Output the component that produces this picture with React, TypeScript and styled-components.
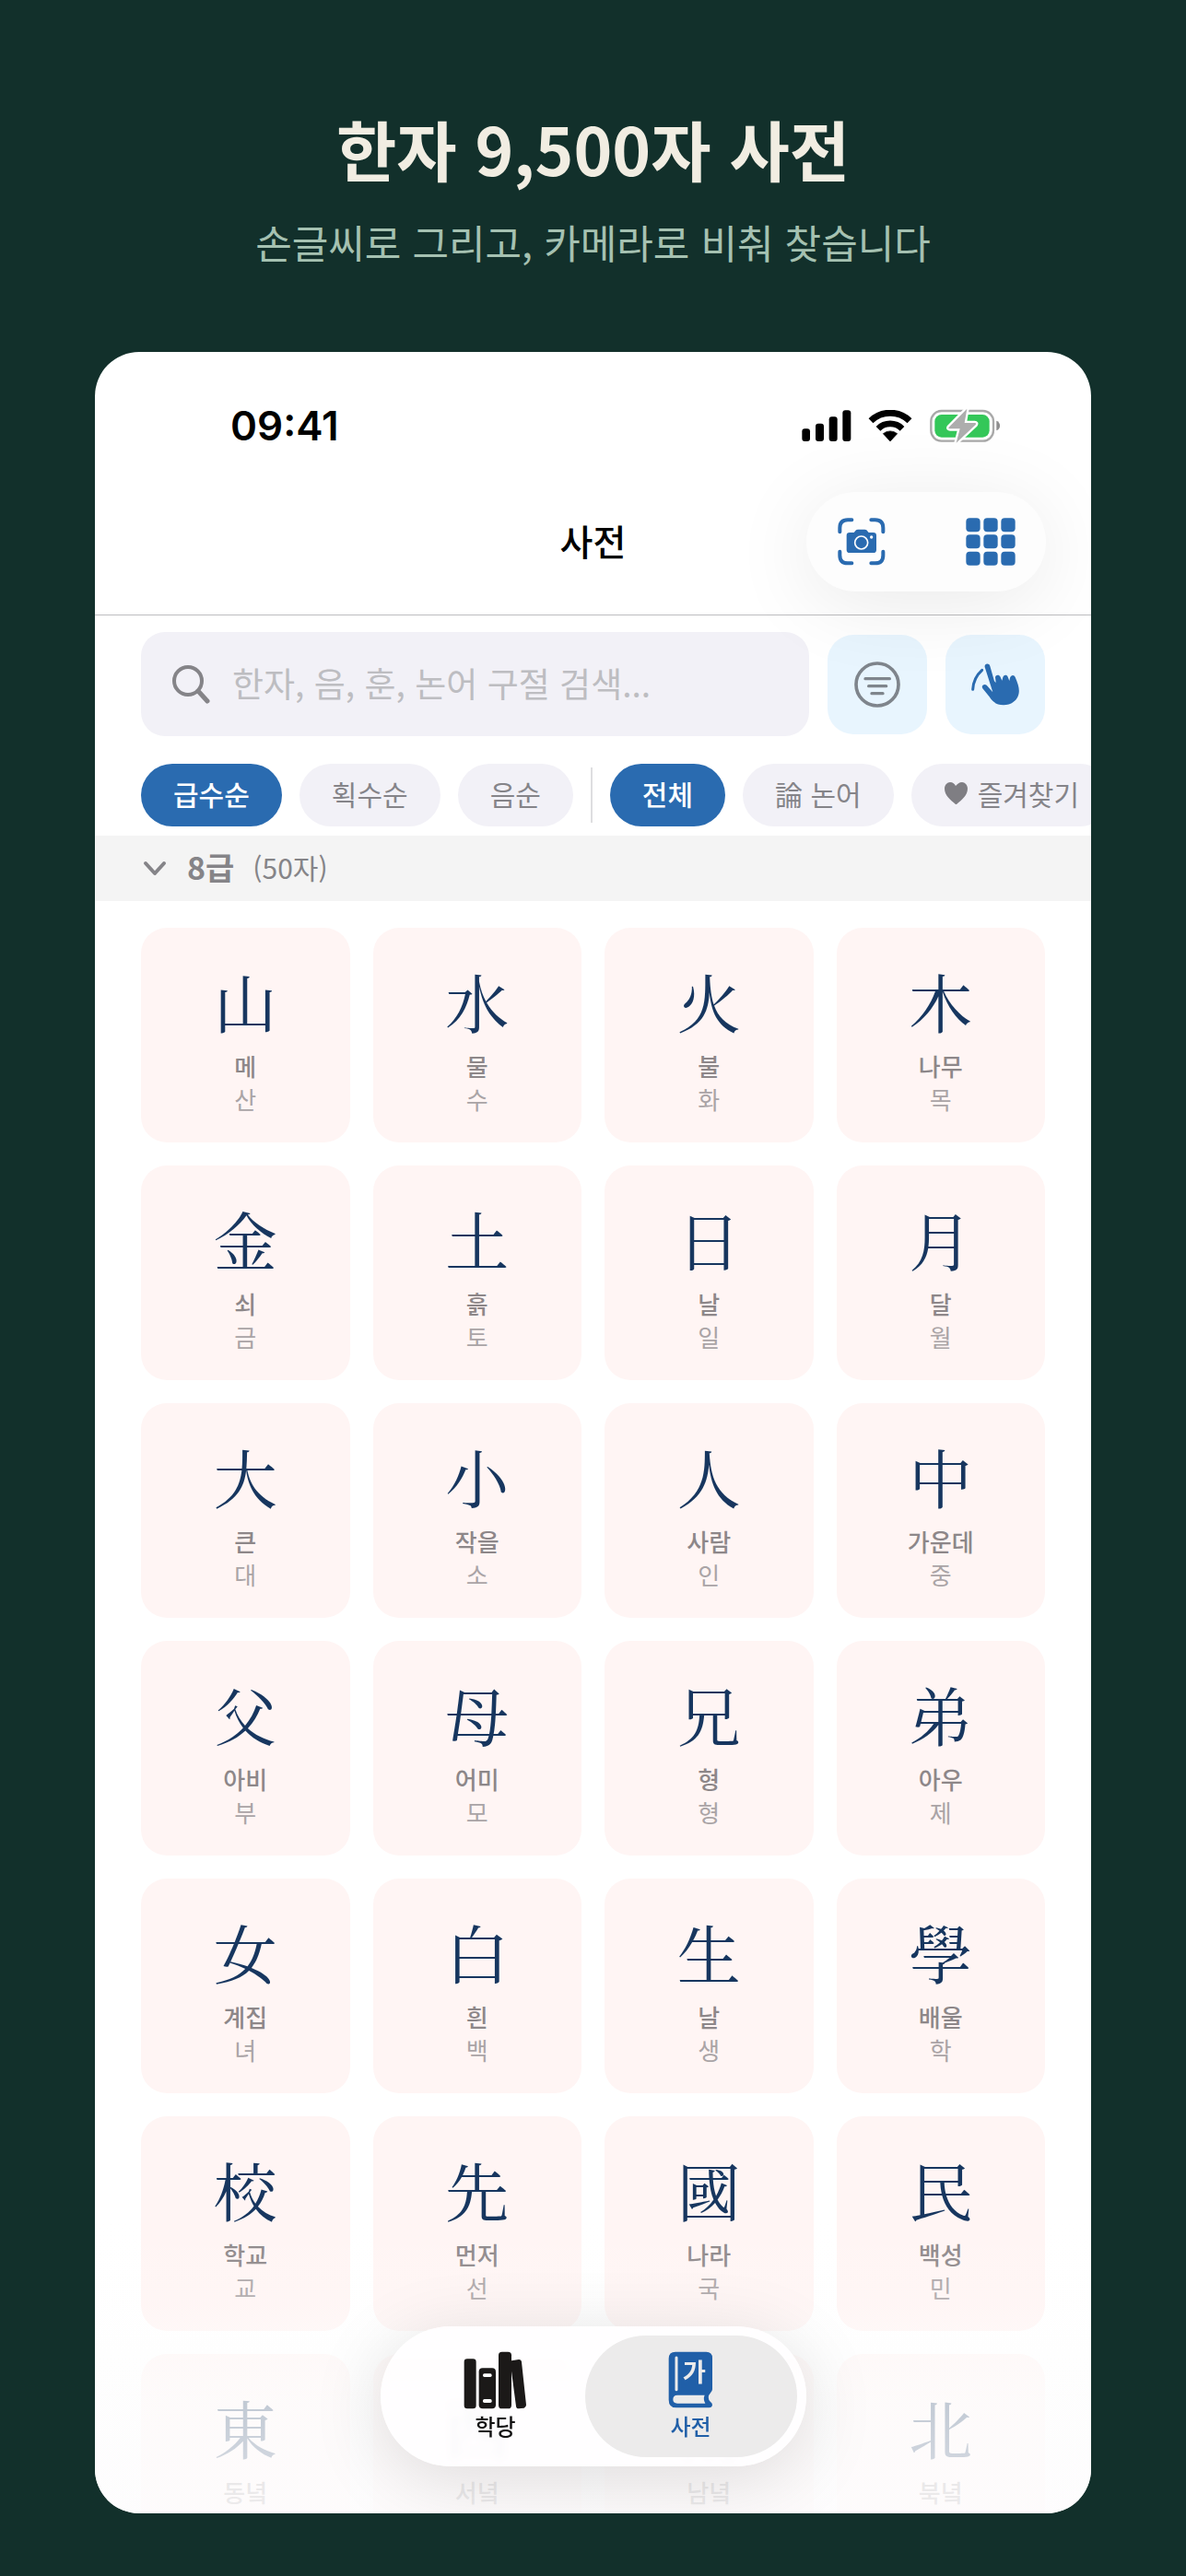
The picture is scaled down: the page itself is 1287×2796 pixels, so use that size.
import React from "react";
import styled, { createGlobalStyle } from "styled-components";

const sans = `"Noto Sans CJK KR", "Noto Sans", sans-serif`;
const serif = `"Noto Serif CJK KR", "Noto Serif CJK JP", "Noto Serif CJK SC", "Noto Serif KR", "Noto Sans CJK KR", serif`;
const blue = "#2a6bb0";

const GlobalStyle = createGlobalStyle`
  * { box-sizing: border-box; }
  body { margin: 0; background: #12302b; font-family: ${sans}; }
  button { font: inherit; border: 0; padding: 0; margin: 0; background: none; cursor: pointer; }
  h1, h2, p { margin: 0; }
  svg { display: block; flex: none; }
`;

const Page = styled.main`
  height: 100vh;
  display: flex;
  flex-direction: column;
  padding: 0 103px 68px;
  background: #12302b;
`;

const Hero = styled.header`
  flex: none;
  height: 382px;
  padding-top: 108px;
  text-align: center;
`;

const Headline = styled.h1`
  font-size: 71px;
  line-height: 104px;
  font-weight: 700;
  color: #f1ede2;
`;

const Tagline = styled.p`
  margin-top: 18px;
  font-size: 43px;
  line-height: 64px;
  color: #a5c1b1;
`;

const Phone = styled.section`
  position: relative;
  flex: 1;
  min-height: 0;
  display: flex;
  flex-direction: column;
  border-radius: 48px;
  background: #fff;
  overflow: hidden;
`;

const TopBar = styled.div`
  position: relative;
  z-index: 1;
  flex: none;
  padding-top: 40px;
  border-bottom: 1px solid #bdbdbf;
`;

const StatusBar = styled.div`
  height: 80px;
  display: flex;
  align-items: center;
  justify-content: space-between;
  padding: 0 98px 0 147px;
`;

const Clock = styled.time`
  font-family: Inter, sans-serif;
  font-size: 44px;
  line-height: 52px;
  font-weight: 600;
  color: #000;
`;

const StatusIcons = styled.div`
  display: flex;
  align-items: center;
  gap: 18px;
`;

const NavBar = styled.div`
  margin-top: 32px;
  padding: 0 49px 25px;
  display: grid;
  grid-template-columns: 1fr auto 1fr;
  align-items: center;
`;

const NavTitle = styled.h2`
  grid-column: 2;
  padding-bottom: 4px;
  font-size: 39px;
  line-height: 56px;
  font-weight: 500;
  color: #000;
`;

const NavActions = styled.div`
  justify-self: end;
  width: 260px;
  height: 108px;
  display: flex;
  justify-content: space-between;
  border-radius: 54px;
  background: #fdfdfd;
  box-shadow: 0 12px 90px rgba(0, 0, 0, 0.09);
`;

const NavButton = styled.button`
  width: 120px;
  display: grid;
  place-items: center;
`;

const SearchRow = styled.form`
  flex: none;
  display: flex;
  align-items: center;
  gap: 20px;
  padding: 18px 50px 0;
`;

const SearchBox = styled.label`
  flex: 1;
  min-width: 0;
  height: 113px;
  display: flex;
  align-items: center;
  gap: 23px;
  padding: 0 34px;
  border-radius: 26px;
  background: #f2f1f7;
`;

const SearchInput = styled.input`
  flex: 1;
  min-width: 0;
  border: 0;
  padding: 0 0 4px;
  outline: 0;
  background: none;
  font-family: ${sans};
  font-size: 37px;
  line-height: 56px;
  color: #1c1c1e;
  &::placeholder { color: #bdbdc1; opacity: 1; }
`;

const ToolButton = styled.button`
  width: 108px;
  height: 108px;
  display: grid;
  place-items: center;
  border-radius: 28px;
  background: #e8f5fe;
`;

const ChipRow = styled.div`
  flex: none;
  display: flex;
  align-items: center;
  gap: 19px;
  padding: 30px 0 10px 50px;
  overflow: hidden;
`;

const Chip = styled.button<{ $on?: boolean }>`
  flex: none;
  height: 68px;
  display: flex;
  align-items: center;
  gap: 10px;
  padding: 0 35px 4px;
  border-radius: 34px;
  background: ${(p) => (p.$on ? blue : "#f2f1f7")};
  color: ${(p) => (p.$on ? "#fff" : "#858489")};
  font-size: 30px;
  line-height: 44px;
  font-weight: ${(p) => (p.$on ? 500 : 400)};
  white-space: nowrap;
`;

const ChipDivider = styled.span`
  flex: none;
  width: 2px;
  height: 60px;
  background: #dedee0;
`;

const SectionHeader = styled.button`
  flex: none;
  height: 71px;
  display: flex;
  align-items: center;
  padding: 0 50px;
  background: #f4f4f4;
  color: #858488;
  text-align: left;
`;

const SectionName = styled.span`
  margin-left: 20px;
  padding-bottom: 4px;
  font-size: 34px;
  line-height: 48px;
  font-weight: 700;
`;

const SectionCount = styled.span`
  margin-left: 20px;
  padding-bottom: 4px;
  font-size: 30px;
  line-height: 48px;
`;

const List = styled.div`
  flex: 1;
  min-height: 0;
  overflow: hidden;
  display: grid;
  grid-template-columns: repeat(4, 1fr);
  grid-auto-rows: 233px;
  gap: 25px;
  padding: 29px 50px 0;
`;

const Card = styled.button`
  display: flex;
  flex-direction: column;
  align-items: center;
  padding-top: 34px;
  border-radius: 28px;
  background: #fff5f4;
`;

const Hanja = styled.span`
  margin-bottom: 6px;
  font-family: ${serif};
  font-size: 69px;
  line-height: 92px;
  color: #17365f;
`;

const Meaning = styled.span`
  font-size: 26px;
  line-height: 36px;
  font-weight: 500;
  color: #8d8789;
`;

const Sound = styled.span`
  font-size: 26px;
  line-height: 36px;
  color: #aaa4a6;
`;

const Fade = styled.div`
  position: absolute;
  inset: auto 0 0;
  height: 320px;
  pointer-events: none;
  background: linear-gradient(
    rgba(253, 253, 253, 0),
    rgba(253, 253, 253, 0.15) 30%,
    rgba(253, 253, 253, 0.5) 46%,
    rgba(253, 253, 253, 0.74) 62%,
    rgba(253, 252, 253, 0.86)
  );
`;

const TabBar = styled.nav`
  position: absolute;
  left: 50%;
  bottom: 51px;
  transform: translateX(-50%);
  height: 152px;
  display: flex;
  padding: 10px;
  border-radius: 76px;
  background: rgba(255, 254, 255, 0.86);
  backdrop-filter: blur(4px);
  box-shadow: 0 14px 80px rgba(0, 0, 0, 0.13);
`;

const Tab = styled.a<{ $on?: boolean }>`
  width: 230px;
  display: flex;
  flex-direction: column;
  align-items: center;
  padding-top: 16px;
  gap: 1px;
  border-radius: 66px;
  background: ${(p) => (p.$on ? "#ecebeb" : "transparent")};
  color: ${(p) => (p.$on ? "#205fa8" : "#121212")};
  font-size: 24px;
  line-height: 34px;
  font-weight: 500;
  text-decoration: none;
  & + & { margin-left: -18px; }
`;

const IconSlot = styled.span`
  height: 64px;
  display: grid;
  place-items: center;
`;

const SignalIcon = () => (
  <svg width="54" height="34" viewBox="30 42 162 102" aria-hidden="true">
    <rect x="31" y="103" width="26" height="41" rx="9" />
    <rect x="75" y="86" width="27" height="58" rx="9" />
    <rect x="119" y="64" width="27" height="80" rx="9" />
    <rect x="163" y="43" width="27" height="101" rx="9" />
  </svg>
);

const WifiIcon = () => (
  <svg width="48" height="34" viewBox="245 42 144 102" aria-hidden="true">
    <path d="M254 77 A91 91 0 0 1 380 77" fill="none" stroke="#000" strokeWidth="21" />
    <path d="M278 103 A55 55 0 0 1 356 103" fill="none" stroke="#000" strokeWidth="20" />
    <path d="M317 144 L294 119 A36 36 0 0 1 340 119 Z" stroke="#000" strokeWidth="2" strokeLinejoin="round" />
  </svg>
);

const BatteryIcon = () => (
  <svg width="78" height="38" viewBox="440 36 234 114" aria-hidden="true">
    <rect x="447" y="45" width="203" height="98" rx="34" fill="none" stroke="#a9a9a9" strokeWidth="7" />
    <path d="M660 77 C675 82 675 104 660 109 Z" fill="#8e8e8e" />
    <rect x="459" y="57" width="178" height="74" rx="22" fill="#34c759" />
    <path
      d="M564 38 L505 98 Q502 103 509 103 H541 L529 149 L592 90 Q596 84 589 84 H556 Z"
      fill="#adadad"
      stroke="#fff"
      strokeWidth="14"
      strokeLinejoin="round"
      paintOrder="stroke"
    />
  </svg>
);

const ScanCameraIcon = () => (
  <svg width="52" height="52" viewBox="146 398 156 156" aria-hidden="true">
    <path
      d="M153 444 V431 Q153 405 179 405 H192 M255 405 H268 Q294 405 294 431 V444 M294 508 V520 Q294 546 268 546 H255 M192 546 H179 Q153 546 153 520 V508"
      fill="none"
      stroke={blue}
      strokeWidth="12"
      strokeLinecap="round"
    />
    <path
      d="M185 446 H199 L206 438 Q208 436 212 436 H234 Q238 436 240 438 L247 446 H262 Q272 446 272 456 V502 Q272 512 262 512 H185 Q175 512 175 502 V456 Q175 446 185 446 Z"
      fill={blue}
    />
    <circle cx="223" cy="479" r="21" fill="none" stroke="#fff" strokeWidth="5" />
    <circle cx="256" cy="461" r="5" fill="#fff" />
  </svg>
);

const GridIcon = () => (
  <svg width="54" height="52" viewBox="562 398 162 156" aria-hidden="true" fill={blue}>
    {[399, 453, 508].map((y) =>
      [563, 620, 677].map((x) => <rect key={`${x}-${y}`} x={x} y={y} width="46" height="45" rx="12" />)
    )}
  </svg>
);

const SearchIcon = () => (
  <svg width="42" height="42" viewBox="0 0 42 42" fill="none" stroke="#858488" aria-hidden="true">
    <circle cx="17" cy="17" r="15" strokeWidth="4" />
    <path d="M28 28 L38 39" strokeWidth="5" strokeLinecap="round" />
  </svg>
);

const FilterIcon = () => (
  <svg width="50" height="50" viewBox="113 114 150 150" fill="none" stroke="#7f858c" strokeLinecap="round" aria-hidden="true">
    <circle cx="188" cy="189" r="69" strokeWidth="11" />
    <path d="M149 170 H228 M160 194 H217 M170 218 H206" strokeWidth="10" />
  </svg>
);

const HandDrawIcon = () => (
  <svg width="54" height="48" viewBox="490 116 162 144" aria-hidden="true">
    <path d="M498 204 Q500 166 528 141" fill="none" stroke={blue} strokeWidth="9" strokeLinecap="round" />
    <path
      d="M537 131 C535 119 551 117 554 128 L568 177 L573 182 L571 164 C573 155 584 155 587 162 L593 175 L596 164 C600 155 609 156 612 163 L617 176 L619 166 C623 155 633 156 636 164 C645 185 650 200 648 215 C645 240 622 255 598 255 C575 255 562 244 552 228 L530 201 C524 192 535 184 543 190 L563 213 Z"
      fill={blue}
    />
  </svg>
);

const HeartIcon = () => (
  <svg width="27" height="26" viewBox="0 0 27 26" fill="#7f7e83" aria-hidden="true">
    <path d="M13 25 C7 20 1 15 1 8 C1 4 4 1 7 1 C10 1 12 3 13 5 C15 3 17 1 20 1 C23 1 26 4 26 8 C26 15 20 20 14 25 Z" />
  </svg>
);

const ChevronIcon = () => (
  <svg width="30" height="20" viewBox="0 0 30 20" fill="none" stroke="#858488" strokeWidth="4" strokeLinecap="round" strokeLinejoin="round" aria-hidden="true">
    <path d="M5 4 L15 15 L25 4" />
  </svg>
);

const BooksIcon = () => (
  <svg width="69" height="63" viewBox="308 125 207 189" fill="#1b1918" aria-hidden="true">
    <rect x="310" y="150" width="39" height="162" rx="10" />
    <rect x="358" y="180" width="55" height="132" rx="12" />
    <rect x="371" y="198" width="29" height="11" rx="5" fill="#fff" />
    <rect x="371" y="281" width="29" height="12" rx="5" fill="#fff" />
    <rect x="422" y="127" width="42" height="185" rx="11" />
    <path d="M464 156 L488 152 Q496 152 497 160 L512 300 Q512 308 505 310 L488 312 Q480 312 479 304 L464 190 Z" />
  </svg>
);

const DictionaryIcon = () => (
  <svg width="49" height="62" viewBox="971 130 147 186" aria-hidden="true">
    <path
      d="M995 132 H1095 Q1115 132 1115 152 V254 Q1115 260 1110 264 Q1095 281 1109 295 Q1115 299 1115 305 Q1114 314 1105 314 H998 Q973 314 973 288 V154 Q973 132 995 132 Z"
      fill="#205fa8"
    />
    <path d="M998 151 V255" stroke="#ecebeb" strokeWidth="9" strokeLinecap="round" />
    <path d="M1001 273 H1090 Q1084 286 1092 300 H1001 Q987 300 987 287 Q987 273 1001 273 Z" fill="#ecebeb" />
    <text x="1056" y="229" textAnchor="middle" fontFamily="Noto Sans CJK KR, sans-serif" fontWeight="700" fontSize="82" fill="#ecebeb">
      가
    </text>
  </svg>
);

const characters: [string, string, string?][] = [
  ["山", "메", "산"], ["水", "물", "수"], ["火", "불", "화"], ["木", "나무", "목"],
  ["金", "쇠", "금"], ["土", "흙", "토"], ["日", "날", "일"], ["月", "달", "월"],
  ["大", "큰", "대"], ["小", "작을", "소"], ["人", "사람", "인"], ["中", "가운데", "중"],
  ["父", "아비", "부"], ["母", "어미", "모"], ["兄", "형", "형"], ["弟", "아우", "제"],
  ["女", "계집", "녀"], ["白", "흰", "백"], ["生", "날", "생"], ["學", "배울", "학"],
  ["校", "학교", "교"], ["先", "먼저", "선"], ["國", "나라", "국"], ["民", "백성", "민"],
  ["東", "동녘"], ["西", "서녘"], ["南", "남녘"], ["北", "북녘"],
];

export default function App() {
  return (
    <>
      <GlobalStyle />
      <Page lang="ko">
        <Hero>
          <Headline>한자 9,500자 사전</Headline>
          <Tagline>손글씨로 그리고, 카메라로 비춰 찾습니다</Tagline>
        </Hero>
        <Phone>
          <TopBar>
            <StatusBar>
              <Clock>09:41</Clock>
              <StatusIcons>
                <SignalIcon />
                <WifiIcon />
                <BatteryIcon />
              </StatusIcons>
            </StatusBar>
            <NavBar>
              <NavTitle>사전</NavTitle>
              <NavActions>
                <NavButton type="button" aria-label="카메라"><ScanCameraIcon /></NavButton>
                <NavButton type="button" aria-label="격자"><GridIcon /></NavButton>
              </NavActions>
            </NavBar>
          </TopBar>
          <SearchRow onSubmit={(e) => e.preventDefault()}>
            <SearchBox>
              <SearchIcon />
              <SearchInput type="text" aria-label="검색" placeholder="한자, 음, 훈, 논어 구절 검색..." />
            </SearchBox>
            <ToolButton type="button" aria-label="필터"><FilterIcon /></ToolButton>
            <ToolButton type="button" aria-label="손글씨"><HandDrawIcon /></ToolButton>
          </SearchRow>
          <ChipRow>
            <Chip type="button" $on>급수순</Chip>
            <Chip type="button">획수순</Chip>
            <Chip type="button">음순</Chip>
            <ChipDivider />
            <Chip type="button" $on>전체</Chip>
            <Chip type="button">論 논어</Chip>
            <Chip type="button"><HeartIcon />즐겨찾기</Chip>
          </ChipRow>
          <SectionHeader type="button" aria-expanded="true">
            <ChevronIcon />
            <SectionName>8급</SectionName>
            <SectionCount>(50자)</SectionCount>
          </SectionHeader>
          <List>
            {characters.map(([hanja, meaning, sound]) => (
              <Card key={hanja} type="button">
                <Hanja>{hanja}</Hanja>
                <Meaning>{meaning}</Meaning>
                {sound && <Sound>{sound}</Sound>}
              </Card>
            ))}
          </List>
          <Fade />
          <TabBar>
            <Tab href="#academy">
              <IconSlot><BooksIcon /></IconSlot>
              학당
            </Tab>
            <Tab href="#dictionary" $on aria-current="page">
              <IconSlot><DictionaryIcon /></IconSlot>
              사전
            </Tab>
          </TabBar>
        </Phone>
      </Page>
    </>
  );
}
